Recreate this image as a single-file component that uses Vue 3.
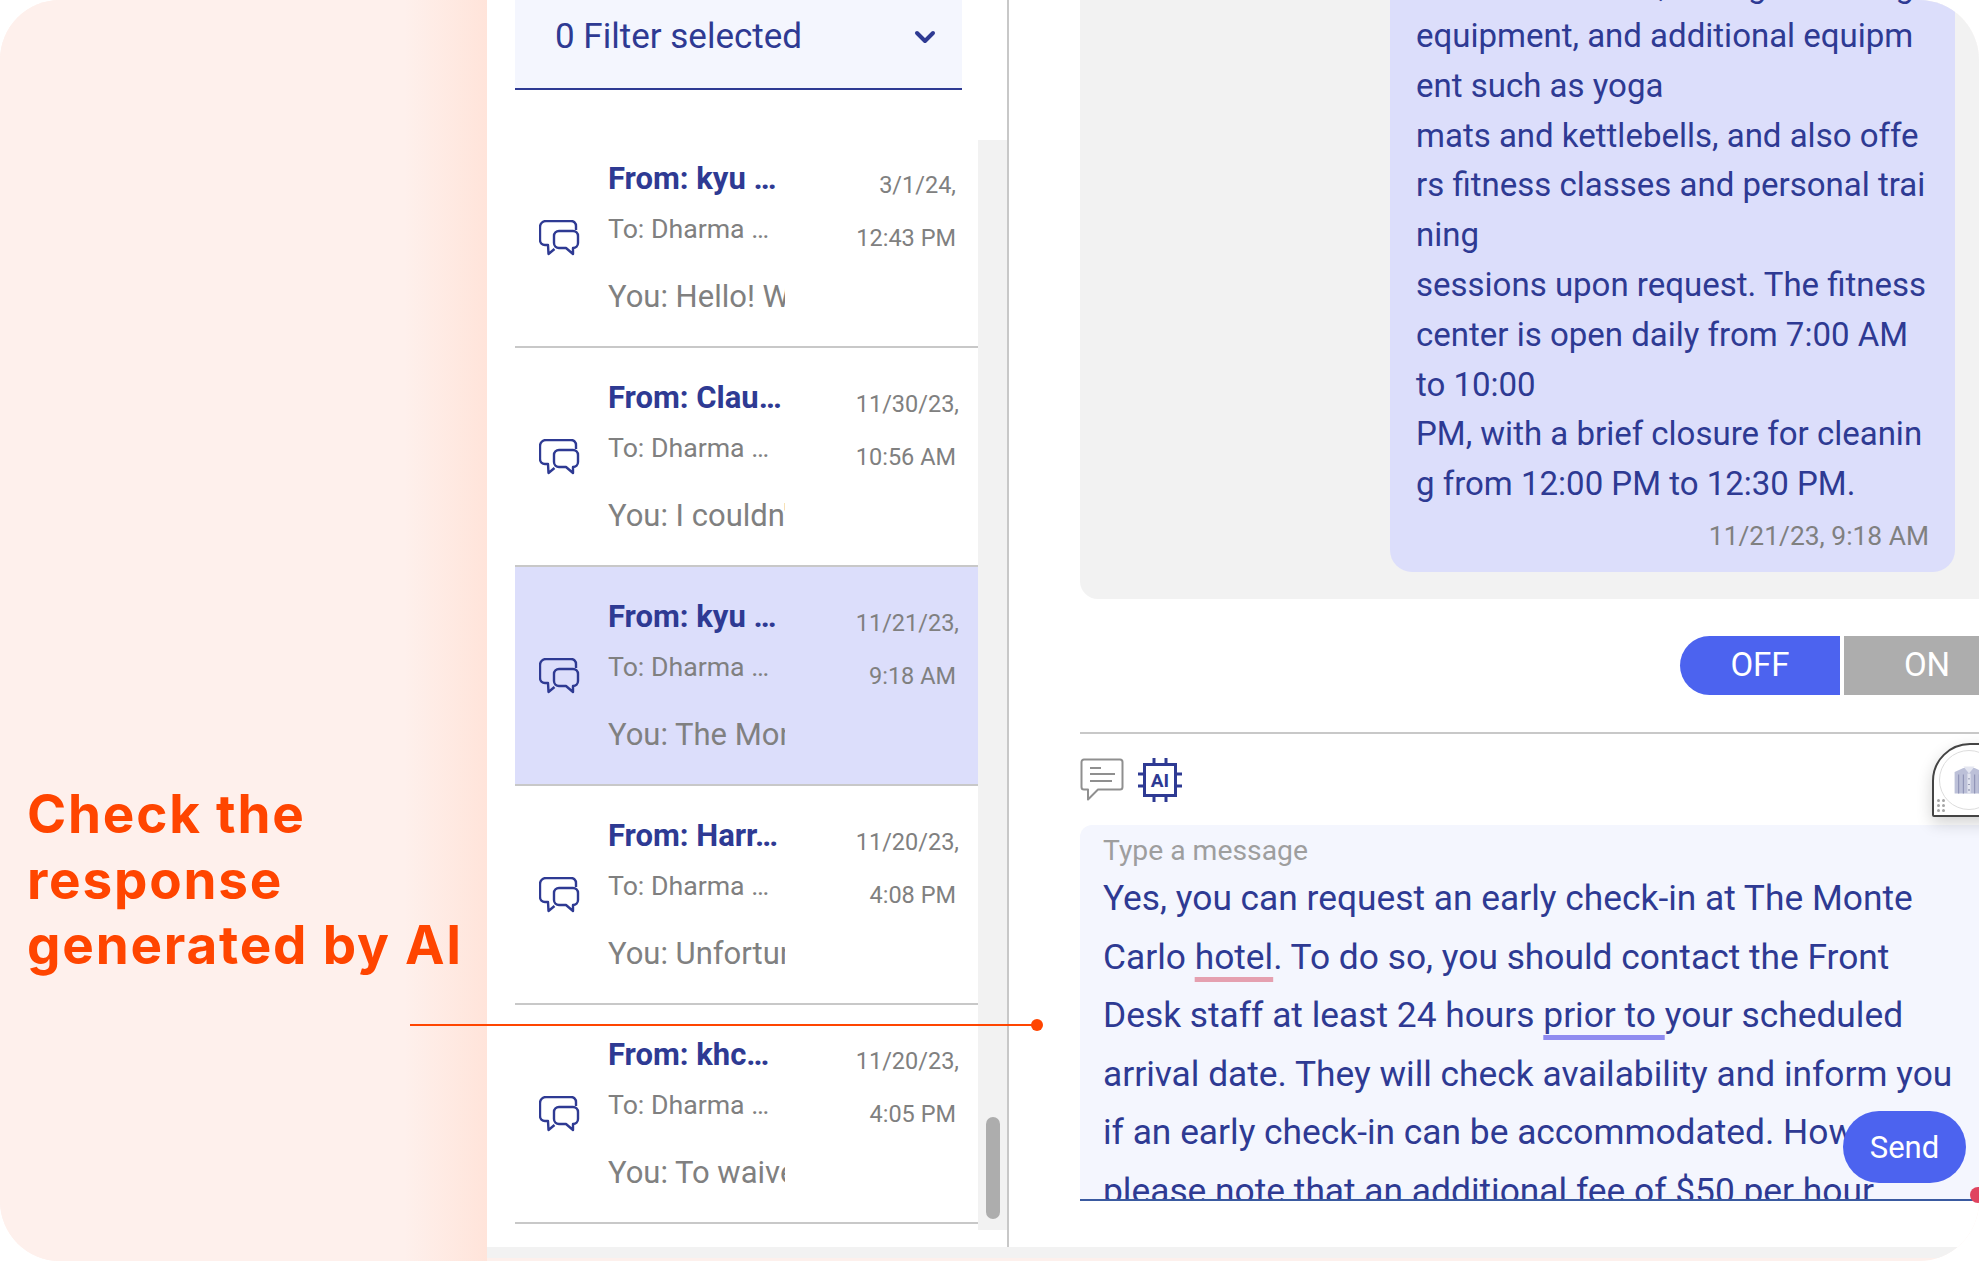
<template>
  <div class="page">
    <aside class="intro">
      <p class="intro-text">Check the<br>response<br>generated by AI</p>
    </aside>

    <div class="app">
      <main class="app-main">
        <section class="inbox">
          <div class="filter">
            <span>0 Filter selected</span>
            <svg class="chevron" width="22" height="14" viewBox="0 0 22 14">
              <path d="M3 3l8 8 8-8" fill="none" stroke="#2e3a93" stroke-width="4" stroke-linecap="round" stroke-linejoin="round" />
            </svg>
          </div>
          <div class="inbox-body">
            <ul class="threads">
              <li
                v-for="t in threads"
                :key="t.from + t.time"
                class="thread"
                :class="{ active: t.active }"
              >
                <svg class="thread-icon" width="42" height="38" viewBox="0 0 42 38" fill="none" stroke="#2e3a93" stroke-width="2.4" stroke-linejoin="round">
                  <path d="M37 10V6a5 5 0 0 0-5-5H7a6 6 0 0 0-6 6v13a5 5 0 0 0 5 5h3l.5 9 6-5" />
                  <path d="M20 11h14a5 5 0 0 1 5 5v7a5 5 0 0 1-5 5v6l-7-6h-7a5 5 0 0 1-5-5v-7a5 5 0 0 1 5-5z" />
                </svg>
                <div class="thread-text">
                  <div class="thread-from">{{ t.from }}</div>
                  <div class="thread-to">To: Dharma …</div>
                  <div class="thread-preview">{{ t.preview }}</div>
                </div>
                <div class="thread-time">
                  <div :class="{ 'date-long': t.date.length > 7 }">{{ t.date }}</div>
                  <div>{{ t.time }}</div>
                </div>
              </li>
            </ul>
            <div class="scroll-track">
              <div class="scroll-thumb"></div>
            </div>
          </div>
        </section>

        <section class="chat">
          <div class="history">
            <div class="bubble">
              <div v-for="line in bubbleLines" :key="line" class="bubble-line">{{ line }}</div>
              <div class="bubble-time">11/21/23, 9:18 AM</div>
            </div>
          </div>

          <div class="toggle">
            <span class="toggle-off">OFF</span>
            <span class="toggle-on">ON</span>
          </div>

          <div class="tools">
            <svg width="44" height="44" viewBox="0 0 44 44" fill="none" stroke="#8f8f8f">
              <path d="M4 1.500h36a2.500 2.500 0 0 1 2.500 2.500v25a2.500 2.500 0 0 1-2.500 2.500H18L8 41.500v-10H4A2.500 2.500 0 0 1 1.500 29V4A2.500 2.500 0 0 1 4 1.500z" stroke-width="2" stroke-linejoin="round" />
              <path d="M10 10h11M10 16h25M10 23h22" stroke-width="2" />
            </svg>
            <svg width="46" height="46" viewBox="0 0 46 46" fill="none" stroke="#2e3a93" stroke-width="3">
              <rect x="7.500" y="7.500" width="31" height="31" />
              <path d="M17 1v6M29 1v6M17 39v6M29 39v6M1 17h6M1 29h6M39 17h6M39 29h6" />
              <text x="23" y="30" text-anchor="middle" class="chip-label">AI</text>
            </svg>
          </div>

          <div class="composer">
            <div class="composer-hint">Type a message</div>
            <div class="composer-text">
              Yes, you can request an early check-in at The Monte Carlo <span class="mark-red">hotel</span>. To do so, you should contact the Front Desk staff at least 24 hours <span class="mark-blue">prior to </span>your scheduled arrival date. They will check availability and inform you if an early check-in can be accommodated. However, please note that an additional fee of $50 per hour
            </div>
          </div>

          <button class="send">Send</button>
          <span class="red-dot"></span>

          <div class="widget">
            <div class="widget-circle">
              <svg width="32" height="32" viewBox="0 0 40 40">
                <path d="M13 5h14l11 5v27H2V10z" fill="#bcc0d8" />
                <path d="M13 3h14l-7 9z" fill="#e3e5f0" />
                <path d="M7 13v24M13 13v24M27 13v24M33 13v24" stroke="#9296b8" stroke-width="1.500" />
                <path d="M20 12v25" stroke="#e3e5f0" stroke-width="4" />
                <path d="M20 18v1M20 25v1M20 32v1" stroke="#6a6e92" stroke-width="2" />
              </svg>
            </div>
            <div class="widget-grip">
              <i v-for="n in 6" :key="n"></i>
            </div>
          </div>
        </section>
      </main>
      <div class="app-foot"></div>
    </div>

    <div class="pointer"></div>
  </div>
</template>

<script setup>
const threads = [
  { from: "From: kyu …", preview: "You: Hello! We", date: "3/1/24,", time: "12:43 PM" },
  { from: "From: Clau…", preview: "You: I couldn't", date: "11/30/23,", time: "10:56 AM" },
  { from: "From: kyu …", preview: "You: The Monte", date: "11/21/23,", time: "9:18 AM", active: true },
  { from: "From: Harr…", preview: "You: Unfortunately", date: "11/20/23,", time: "4:08 PM" },
  { from: "From: khc…", preview: "You: To waive", date: "11/20/23,", time: "4:05 PM" },
]

const bubbleLines = [
  "cardio machines, strength training",
  "equipment, and additional equipm",
  "ent such as yoga",
  "mats and kettlebells, and also offe",
  "rs fitness classes and personal trai",
  "ning",
  "sessions upon request. The fitness",
  "center is open daily from 7:00 AM",
  "to 10:00",
  "PM, with a brief closure for cleanin",
  "g from 12:00 PM to 12:30 PM.",
]
</script>

<style>
html,
body {
  margin: 0;
  background: #fff;
}
</style>

<style scoped>
.page {
  position: relative;
  display: flex;
  width: 1979px;
  height: 1261px;
  overflow: hidden;
  border-radius: 60px;
  background: #fdf0ec;
  font-family: Roboto, "Liberation Sans", sans-serif;
  color: #2e3a93;
}

.intro {
  flex: 0 0 487px;
  box-sizing: border-box;
  padding: 782px 0 0 27px;
  background: linear-gradient(90deg, #fef0ec 0%, #fef0ec 83%, #ffe4da 100%);
}

.intro-text {
  margin: 0;
  font-family: Inter, "Open Sans", sans-serif;
  font-size: 53px;
  font-weight: 700;
  letter-spacing: 1.800px;
  line-height: 65.600px;
  color: #ff4500;
  white-space: nowrap;
}

.app {
  flex: 1;
  display: flex;
  flex-direction: column;
  min-width: 0;
}

.app-main {
  display: flex;
  height: 1247px;
  background: #fff;
}

.app-foot {
  height: 11px;
  background: #f2f2f2;
}

.inbox {
  flex: 0 0 522px;
  box-sizing: border-box;
  padding-left: 28px;
  border-right: 2px solid #c8c8c8;
}

.filter {
  display: flex;
  align-items: flex-start;
  justify-content: space-between;
  box-sizing: border-box;
  width: 447px;
  height: 90px;
  padding: 16px 26px 0 40px;
  margin-bottom: 39px;
  background: #f4f6fe;
  border-bottom: 2px solid #2e3a93;
  font-size: 35px;
  line-height: 42px;
}

.chevron {
  margin-top: 14px;
}

.inbox-body {
  display: flex;
  align-items: flex-start;
}

.threads {
  flex: 0 0 463px;
  margin: 0;
  padding: 0;
  list-style: none;
}

.thread {
  display: flex;
  box-sizing: border-box;
  height: 219px;
  padding-left: 24px;
  border-bottom: 2px solid #c8c8c8;
}

.thread.active {
  background: #dcdefb;
}

.thread-icon {
  flex: none;
  margin-top: 91px;
}

.thread-text {
  flex: 0 0 177px;
  margin-left: 27px;
  overflow: hidden;
  white-space: nowrap;
}

.thread-from {
  margin-top: 32px;
  font-size: 31px;
  font-weight: 700;
  line-height: 36px;
}

.thread-to {
  margin-top: 15px;
  font-size: 26.700px;
  line-height: 34px;
  color: #808080;
}

.thread-preview {
  margin-top: 32px;
  font-size: 31px;
  line-height: 38px;
  color: #808080;
}

.thread-time {
  flex: 1;
  padding: 30px 22px 0 0;
  font-size: 23.500px;
  line-height: 53px;
  color: #808080;
  text-align: right;
  white-space: nowrap;
}

.date-long {
  margin-right: -3px;
}

.scroll-track {
  flex: 0 0 29px;
  display: flex;
  justify-content: center;
  align-items: flex-end;
  box-sizing: border-box;
  height: 1090px;
  margin-top: 11px;
  padding-bottom: 11px;
  background: #f2f2f2;
}

.scroll-thumb {
  width: 14px;
  height: 102px;
  border-radius: 7px;
  background: #adadad;
}

.chat {
  position: relative;
  flex: 1;
  min-width: 0;
  padding-left: 71px;
}

.history {
  display: flex;
  justify-content: flex-end;
  align-items: flex-end;
  box-sizing: border-box;
  height: 599px;
  padding: 0 24px 27px 0;
  overflow: hidden;
  background: #f2f2f2;
  border-bottom-left-radius: 18px;
}

.bubble {
  flex: 0 0 565px;
  box-sizing: border-box;
  padding: 0 26px 18px;
  background: #dcdefb;
  border-radius: 22px;
  font-size: 33px;
  line-height: 49.800px;
}

.bubble-line {
  white-space: nowrap;
}

.bubble-time {
  margin-top: 9px;
  font-size: 26.400px;
  line-height: 36px;
  color: #808080;
  text-align: right;
}

.toggle {
  display: flex;
  justify-content: flex-end;
  gap: 4px;
  height: 59px;
  margin: 37px -31px 0 0;
  font-size: 33px;
  line-height: 58px;
  color: #fff;
  text-align: center;
}

.toggle-off {
  width: 160px;
  background: #4c63ef;
  border-radius: 30px 0 0 30px;
}

.toggle-on {
  width: 166px;
  background: #adadad;
}

.tools {
  display: flex;
  align-items: center;
  gap: 13px;
  height: 91px;
  margin-top: 37px;
  border-top: 2px solid #c8c8c8;
}

.chip-label {
  font-family: Roboto, sans-serif;
  font-size: 19px;
  font-weight: 700;
  fill: #2e3a93;
  stroke: none;
}

.composer {
  box-sizing: border-box;
  height: 376px;
  padding: 8px 0 0 23px;
  overflow: hidden;
  background: #f4f6fe;
  border-bottom: 2px solid #3a5aa0;
  border-top-left-radius: 12px;
}

.composer-hint {
  font-size: 28.300px;
  line-height: 36px;
  color: #9e9e9e;
}

.composer-text {
  width: 866px;
  font-size: 35.350px;
  line-height: 58.600px;
}

.mark-red,
.mark-blue {
  text-decoration: underline;
  text-decoration-thickness: 5px;
  text-decoration-skip-ink: none;
  text-underline-offset: 8px;
}

.mark-red {
  text-decoration-color: #e5a0b0;
}

.mark-blue {
  text-decoration-color: #8f8bf0;
}

.send {
  position: absolute;
  right: 13px;
  top: 1111px;
  width: 123px;
  height: 72px;
  padding: 0;
  border: 0;
  border-radius: 36px;
  background: #4c63ef;
  color: #fff;
  font-family: inherit;
  font-size: 31px;
}

.red-dot {
  position: absolute;
  left: 961px;
  top: 1187px;
  width: 16px;
  height: 16px;
  border-radius: 50%;
  background: #e0445f;
}

.widget {
  position: absolute;
  left: 923px;
  top: 743px;
  box-sizing: border-box;
  width: 90px;
  height: 74px;
  border: 2px solid #444;
  border-radius: 38px 38px 0 2px;
  background: #fff;
  box-shadow: 0 6px 16px rgba(0, 0, 0, 0.18);
}

.widget-circle {
  display: flex;
  align-items: center;
  justify-content: center;
  box-sizing: border-box;
  width: 60px;
  height: 60px;
  margin: 5px 0 0 5px;
  border: 1px solid #ddd;
  border-radius: 50%;
}

.widget-grip {
  position: absolute;
  left: 3px;
  bottom: 3px;
  display: grid;
  grid-template-columns: 3px 3px;
  gap: 2px;
}

.widget-grip i {
  height: 3px;
  border-radius: 50%;
  background: #a5a5a5;
}

.pointer {
  position: absolute;
  left: 410px;
  top: 1024px;
  width: 627px;
  height: 2px;
  background: #ff4500;
}

.pointer::after {
  content: "";
  position: absolute;
  right: -6px;
  top: -5px;
  width: 12px;
  height: 12px;
  border-radius: 50%;
  background: #ff4500;
}
</style>
